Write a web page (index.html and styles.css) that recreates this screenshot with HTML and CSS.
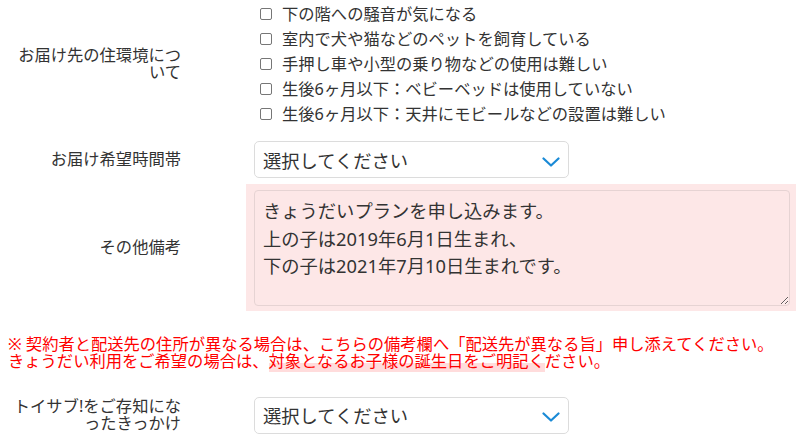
FILE: index.html
```html
<!DOCTYPE html>
<html lang="ja">
<head>
    <meta charset="UTF-8">
    <title>お届け先情報</title>
    <link rel="stylesheet" href="styles.css">
</head>
<body>

    <div class="form">
        <div class="row row-checks">
            <div class="label">お届け先の住環境について</div>
            <div class="field">
                <ul class="checks">
                    <li><label><input type="checkbox"> 下の階への騒音が気になる</label></li>
                    <li><label><input type="checkbox"> 室内で犬や猫などのペットを飼育している</label></li>
                    <li><label><input type="checkbox"> 手押し車や小型の乗り物などの使用は難しい</label></li>
                    <li><label><input type="checkbox"> 生後6ヶ月以下：ベビーベッドは使用していない</label></li>
                    <li><label><input type="checkbox"> 生後6ヶ月以下：天井にモビールなどの設置は難しい</label></li>
                </ul>
            </div>
        </div>

        <div class="row row-select">
            <div class="label">お届け希望時間帯</div>
            <div class="field">
                <div class="select">
                    <span>選択してください</span>
                    <svg width="18" height="10" viewBox="0 0 18 10"><path d="M1.5 1.5 L9 8.5 L16.5 1.5" fill="none" stroke="#1a8ad6" stroke-width="2.2" stroke-linecap="round" stroke-linejoin="round"/></svg>
                </div>
            </div>
        </div>

        <div class="row row-note">
            <div class="label">その他備考</div>
            <div class="field field-pink">
                <textarea>きょうだいプランを申し込みます。
上の子は2019年6月1日生まれ、
下の子は2021年7月10日生まれです。</textarea>
            </div>
        </div>
    </div>

    <p class="notice">
        ※ 契約者と配送先の住所が異なる場合は、こちらの備考欄へ「配送先が異なる旨」申し添えてください。<br>
        きょうだい利用をご希望の場合は、<span class="marker">対象となるお子様の誕生日をご明記く</span>ださい。
    </p>

    <div class="form">
        <div class="row row-last">
            <div class="label">トイサブ!をご存知になったきっかけ</div>
            <div class="field">
                <div class="select">
                    <span>選択してください</span>
                    <svg width="18" height="10" viewBox="0 0 18 10"><path d="M1.5 1.5 L9 8.5 L16.5 1.5" fill="none" stroke="#1a8ad6" stroke-width="2.2" stroke-linecap="round" stroke-linejoin="round"/></svg>
                </div>
            </div>
        </div>
    </div>

</body>
</html>
```

FILE: styles.css
```css
* {
    margin: 0;
    padding: 0;
    box-sizing: border-box;
}

body {
    font-family: "Noto Sans", "Noto Sans CJK JP", sans-serif;
    font-size: 16.3px;
    color: #333;
    background-color: #fff;
    width: 800px;
    height: 443px;
    overflow: hidden;
}

.form {
    width: 796px;
}

.row {
    display: grid;
    grid-template-columns: 246px 1fr;
    align-items: center;
}

.label {
    padding: 0 65px 0 10px;
    text-align: right;
    line-height: 17.5px;
    line-break: normal;
}

.field {
    padding: 0 6px 0 8px;
}

/* チェックボックス */
.row-checks {
    padding: 1.5px 0 8.5px;
}

.checks {
    list-style: none;
}

.checks li {
    line-height: 25px;
}

.checks label {
    display: flex;
    align-items: center;
}

.checks input {
    appearance: none;
    width: 12px;
    height: 12px;
    border: 1px solid #767676;
    border-radius: 2px;
    margin: 0 10px 0 6px;
    background: #fff;
}

/* セレクト */
.row-select .field {
    padding-top: 6px;
    padding-bottom: 6px;
}

.select {
    width: 315px;
    height: 37px;
    border: 1px solid #dcdcdc;
    border-radius: 5px;
    background: #fff;
    display: flex;
    align-items: center;
    justify-content: space-between;
    padding: 0 8px 0 8px;
    font-size: 18.3px;
    color: #333;
}

.select svg {
    margin-top: 4px;
}

/* 備考 */
.field-pink {
    background-color: #fde7e7;
    padding: 6px 6px 5px 8px;
}

textarea {
    display: block;
    width: 100%;
    height: 116px;
    font-family: inherit;
    font-size: 18.3px;
    line-height: 27.5px;
    color: #333;
    background-color: #fde7e7;
    border: 1px solid #e6d3d3;
    border-radius: 4px;
    padding: 6px 8px;
    resize: vertical;
}

/* 注意書き */
.notice {
    margin: 25px 0 0 8px;
    color: #f00;
    line-height: 16.8px;
}

.marker {
    background: linear-gradient(transparent 60%, #ffdcdc 60%);
}

.row-last {
    margin-top: 27px;
}
```
